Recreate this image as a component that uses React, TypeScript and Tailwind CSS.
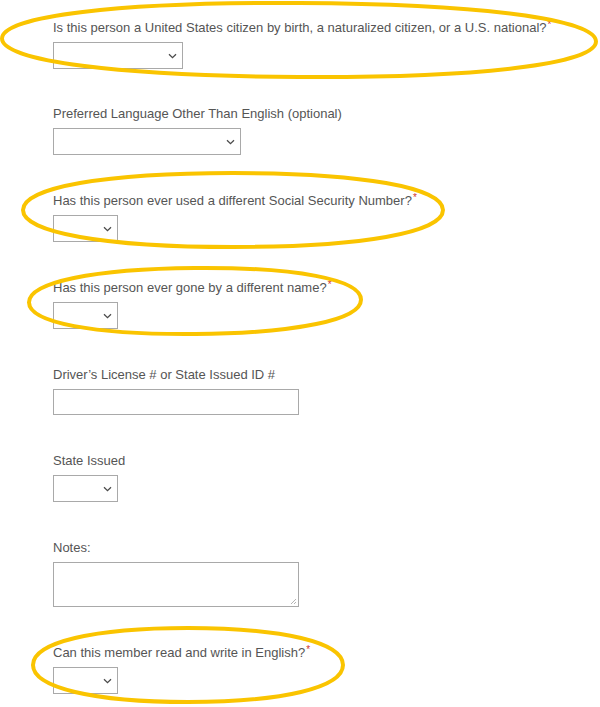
import React from 'react';

// boxier than a true ellipse, like a hand-drawn ring
const ring = (cx: number, cy: number, rx: number, ry: number, k = 0.61) =>
  `M${cx - rx},${cy} C${cx - rx},${cy - k * ry} ${cx - k * rx},${cy - ry} ${cx},${cy - ry} ` +
  `C${cx + k * rx},${cy - ry} ${cx + rx},${cy - k * ry} ${cx + rx},${cy} ` +
  `C${cx + rx},${cy + k * ry} ${cx + k * rx},${cy + ry} ${cx},${cy + ry} ` +
  `C${cx - k * rx},${cy + ry} ${cx - rx},${cy + k * ry} ${cx - rx},${cy} Z`;

const Chevron = () => (
  <svg width="9" height="6" viewBox="0 0 9 6" className="pointer-events-none absolute right-[6px] top-1/2 -translate-y-1/2">
    <path d="M1 1.2 L4.5 4.6 L8 1.2" fill="none" stroke="#4b4b4b" strokeWidth="1.3" />
  </svg>
);

const Select: React.FC<{ width: string }> = ({ width }) => (
  <div className={`relative h-[27px] ${width}`}>
    <select className="h-full w-full appearance-none border border-[#a9a9a9] bg-white outline-none" defaultValue="">
      <option value=""></option>
    </select>
    <Chevron />
  </div>
);

const Label: React.FC<{ text: string; required?: boolean }> = ({ text, required }) => (
  <label className="mb-[7px] block h-4 whitespace-nowrap text-[13px] leading-[18px] text-[#555]">
    {text}
    {required && <span className="relative -top-[4px] ml-[1px] text-[10px] leading-none text-[#d0342c]">*</span>}
  </label>
);

export default function App() {
  return (
    <div className="relative h-[707px] w-[600px] overflow-hidden bg-white font-['Liberation_Sans',Arial,sans-serif]">
      <form className="flex flex-col gap-[37px] pl-[53px] pt-[19px]">
        <div>
          <Label text="Is this person a United States citizen by birth, a naturalized citizen, or a U.S. national?" required />
          <Select width="w-[130px]" />
        </div>
        <div className="-mt-px">
          <Label text="Preferred Language Other Than English (optional)" />
          <Select width="w-[188px]" />
        </div>
        <div>
          <Label text="Has this person ever used a different Social Security Number?" required />
          <Select width="w-[65px]" />
        </div>
        <div>
          <Label text="Has this person ever gone by a different name?" required />
          <Select width="w-[65px]" />
        </div>
        <div>
          <Label text="Driver’s License # or State Issued ID #" />
          <input type="text" className="block h-[26px] w-[246px] border border-[#a9a9a9] bg-white outline-none" />
        </div>
        <div>
          <Label text="State Issued" />
          <Select width="w-[65px]" />
        </div>
        <div>
          <Label text="Notes:" />
          <div className="relative h-[45px] w-[246px]">
            <textarea className="block h-full w-full resize-none border border-[#a9a9a9] bg-white outline-none" />
            <svg width="7" height="7" viewBox="0 0 7 7" className="pointer-events-none absolute bottom-[2px] right-[2px]">
              <path d="M6 1 L1 6 M6 4 L4 6" stroke="#b5b5b5" strokeWidth="1" />
            </svg>
          </div>
        </div>
        <div>
          <Label text="Can this member read and write in English?" required />
          <Select width="w-[65px]" />
        </div>
      </form>

      {/* highlight rings drawn over the form */}
      <svg className="pointer-events-none absolute inset-0" width="600" height="707" viewBox="0 0 600 707">
        <g fill="none" stroke="#fac400" strokeWidth="4">
          <path d={ring(299, 40, 297, 37)} transform="rotate(0.3 299 40)" />
          <path d={ring(233, 210, 210, 37)} />
          <path d={ring(195, 301, 166, 33)} transform="rotate(-0.5 195 301)" />
          <path d={ring(188, 665, 155, 37)} />
        </g>
      </svg>
    </div>
  );
}
